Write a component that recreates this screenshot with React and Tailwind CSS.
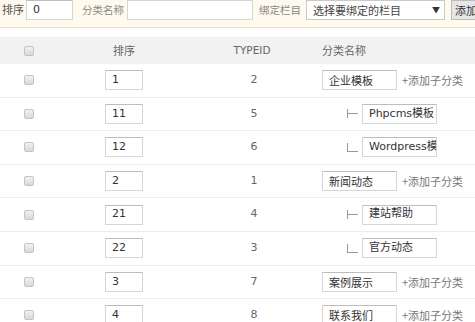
const rows = [
  { sort: "1", id: "2", name: "企业模板", level: 0 },
  { sort: "11", id: "5", name: "Phpcms模板", level: 1, last: false },
  { sort: "12", id: "6", name: "Wordpress模板", level: 1, last: true },
  { sort: "2", id: "1", name: "新闻动态", level: 0 },
  { sort: "21", id: "4", name: "建站帮助", level: 1, last: false },
  { sort: "22", id: "3", name: "官方动态", level: 1, last: true },
  { sort: "3", id: "7", name: "案例展示", level: 0 },
  { sort: "4", id: "8", name: "联系我们", level: 0 },
];

const font = "font-['Noto_Sans_CJK_SC',sans-serif]";
const latin = "font-['DejaVu_Sans','Noto_Sans_CJK_SC',sans-serif]";

function Check() {
  return (
    <span className="block w-[10px] h-[10px] rounded-[2px] border border-[#c4c4c4] bg-gradient-to-b from-[#f2f2f2] to-[#d9d9d9]" />
  );
}

function Box({ value, className = "" }) {
  return (
    <div
      className={`shrink-0 h-[20px] border border-[#d6d6d6] border-t-[#bdbdbd] bg-white flex items-center px-[6px] overflow-hidden whitespace-nowrap text-[11px] text-[#333] ${latin} ${className}`}
    >
      {value}
    </div>
  );
}

// tree line: ├─ or └─
function Branch({ last }) {
  return (
    <span className="shrink-0 relative w-[12px] h-[9px] block">
      <span className="absolute left-0 top-0 w-px h-[9px] bg-[#999]" />
      <span className={`absolute left-0 h-px w-[11px] bg-[#999] ${last ? "bottom-0" : "top-[4px]"}`} />
    </span>
  );
}

export default function App() {
  return (
    <div className={`w-[475px] h-[322px] overflow-hidden bg-white text-[11px] ${font}`}>
      {/* search bar */}
      <div className="h-[28px] bg-[#fffaee] border-b border-[#f1dfbf] flex items-start whitespace-nowrap text-[#666] overflow-hidden">
        <span className="shrink-0 pl-[2px] leading-[19px] text-[#555]">排序</span>
        <Box value="0" className="ml-[2px] w-[47px]" />
        <span className="shrink-0 ml-[9px] leading-[19px] text-[#888] text-[10.5px]">分类名称</span>
        <div className="shrink-0 ml-[3px] w-[126px] h-[20px] border border-[#d6d6d6] bg-white" />
        <span className="shrink-0 ml-[6px] leading-[19px] text-[#888] text-[10.5px]">绑定栏目</span>
        <div className="shrink-0 ml-[5px] w-[139px] h-[20px] border border-[#c9c9c9] bg-white flex items-center pl-[6px] pr-[4px] text-[#444]">
          <span className="flex-1">选择要绑定的栏目</span>
          <span className="text-[8px] text-[#333]">▼</span>
        </div>
        <div className="shrink-0 ml-[6px] h-[20px] px-[3px] border border-[#bbb] bg-[#e6e6e6] text-[#333] leading-[18px]">添加子分类</div>
      </div>

      <div className="h-[9px]" />

      {/* table header */}
      <div className="h-[27px] bg-[#f2f2f2] flex items-center text-[#666]">
        <div className="w-[58px] flex justify-center"><Check /></div>
        <div className="w-[132px] text-center">排序</div>
        <div className={`w-[124px] text-center text-[10.5px] ${latin}`}>TYPEID</div>
        <div className="pl-[8px]">分类名称</div>
      </div>

      {rows.map((r) => (
        <div key={r.id} className="h-[33.6px] border-b border-[#ececec] flex items-center">
          <div className="w-[58px] flex justify-center"><Check /></div>
          <div className="w-[132px] flex justify-center">
            <Box value={r.sort} className="w-[38px]" />
          </div>
          <div className={`w-[128px] text-center text-[#666] ${latin}`}>{r.id}</div>
          {r.level === 0 ? (
            <div className="pl-[4px] flex items-center whitespace-nowrap">
              <Box value={r.name} className={`w-[75px] ${font}`} />
              <span className="ml-[5px] text-[#777]">+添加子分类</span>
            </div>
          ) : (
            <div className="pl-[29px] flex items-center whitespace-nowrap">
              <Branch last={r.last} />
              <Box value={r.name} className="ml-[3px] w-[75px]" />
            </div>
          )}
        </div>
      ))}
    </div>
  );
}
